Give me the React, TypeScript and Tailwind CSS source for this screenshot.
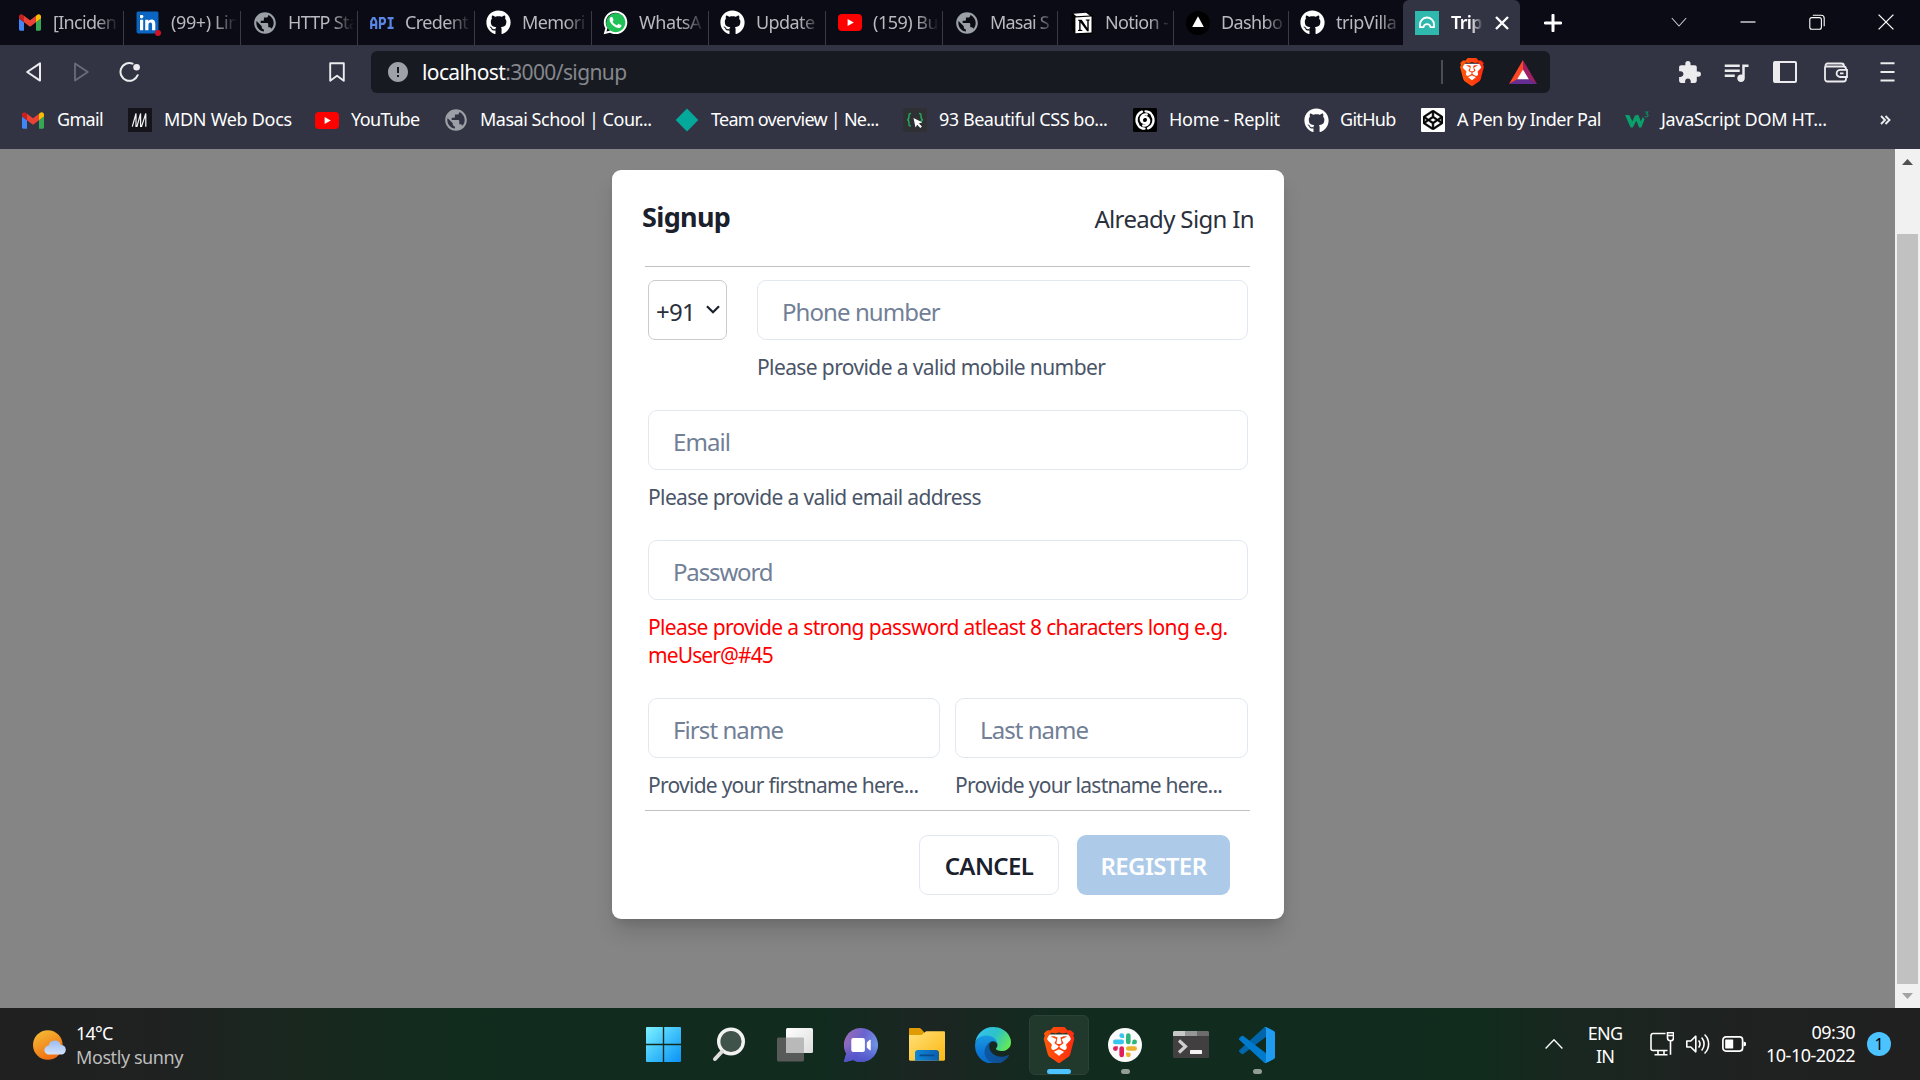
import type { ReactNode } from "react";
import { FaCodepen, FaGithub, FaLinkedin, FaWhatsapp } from "react-icons/fa";
import { MdError, MdExtension, MdPublic, MdQueueMusic } from "react-icons/md";
import { SiBrave } from "react-icons/si";

/* ---------- site icons ---------- */

const Gmail = () => (
  <svg viewBox="52 42 88 66" className="h-[17px] w-[22px]">
    <path fill="#4285f4" d="M58 108h14V74L52 59v43c0 3.32 2.69 6 6 6" />
    <path fill="#34a853" d="M120 108h14c3.32 0 6-2.69 6-6V59l-20 15" />
    <path fill="#fbbc04" d="M120 48v26l20-15v-8c0-7.42-8.47-11.65-14.4-7.2" />
    <path fill="#ea4335" d="M72 74V48l24 18 24-18v26L96 92" />
    <path fill="#c5221f" d="M52 51v8l20 15V48l-5.6-4.2c-5.94-4.45-14.4-.22-14.4 7.2" />
  </svg>
);

const LinkedIn = () => (
  <span className="relative flex size-[22px] items-center justify-center">
    <span className="absolute inset-[3px] bg-white" />
    <FaLinkedin className="relative size-[25px] shrink-0 text-[#0a66c2]" />
    <span className="absolute -right-[2px] -bottom-[2px] size-[6px] rounded-full bg-[#d11124]" />
  </span>
);

const Globe = () => <MdPublic className="size-[26px] shrink-0 text-[#9aa0a6]" />;

const Api = () => (
  <svg viewBox="0 0 24 12" className="h-[12px] w-[24px]" fill="none" stroke="#5b86e5" strokeWidth="2.2">
    <path d="M1.2 12V4.5L3 1.1h1.4l1.8 3.4V12M1.2 7.8h5M10 12V1.1h3.6l1.3 1.5v2.6l-1.3 1.6H10M17.6 1.1h6M20.6 1.1v9.8M17.6 10.9h6" />
  </svg>
);

const GitHub = () => <FaGithub className="size-[25px] shrink-0 text-white" />;

const WhatsApp = () => (
  <span className="relative flex size-[24px] items-center justify-center">
    <span className="absolute inset-[2px] rounded-full bg-[#1fc157]" />
    <FaWhatsapp className="relative size-[27px] shrink-0 text-white" />
  </span>
);

const YouTube = () => (
  <svg viewBox="0 0 24 17" className="h-[17px] w-[24px]">
    <rect width="24" height="17" rx="4" fill="#f00" />
    <path d="M9.6 4.9v7.2l6.2-3.6z" fill="#fff" />
  </svg>
);

const Notion = () => (
  <svg viewBox="0 0 24 24" className="size-[24px]">
    <path d="M1.5 2.5 17 1l6 4v17.5L6.500 23.500 1.500 18z" fill="#000" />
    <path d="M3.400 2.800 16 1.800l3.800 2.600L6.300 5.200z" fill="#fff" />
    <path d="M5.400 6.600 21.500 5.600v15.800L5.400 22.300z" fill="#fff" />
    <path d="M8 8.800h3.700l5.600 8.200V9.800l-1.500-.3V8.500h4v.8l-1.100.5v10.500h-1.600L10.600 11.400v7.300l1.700.4v.8H8v-.8l1.200-.4V9.900L8 9.600z" fill="#000" />
  </svg>
);

const Vercel = () => (
  <svg viewBox="0 0 24 24" className="size-[24px]">
    <circle cx="12" cy="12" r="12" fill="#000" />
    <path d="M12 5.200 17.800 16H6.200z" fill="#fff" />
  </svg>
);

const TripVilla = () => (
  <svg viewBox="0 0 24 24" className="size-[24px]">
    <rect width="24" height="24" fill="#2fb8ad" />
    <path
      d="M5 16.200v-2.700a7 7 0 0 1 14 0v2.700h-3.400c-.5-2-1.700-3-3.600-3s-3.100 1-3.600 3z"
      fill="none"
      stroke="#fff"
      strokeWidth="1.800"
      strokeLinejoin="round"
    />
  </svg>
);

const Mdn = () => (
  <svg viewBox="0 0 24 24" className="size-[24px]">
    <rect width="24" height="24" fill="#15141a" />
    <path d="M4.300 18.700 8 5.500V18.500h1L12.600 5.500V18.500h1L17.800 5.500V18.700" fill="none" stroke="#f4f4f4" strokeWidth="1.200" />
  </svg>
);

const Diamond = () => (
  <svg viewBox="0 0 24 24" className="size-[24px]">
    <path d="M12 .6 23.300 12 12 23.400.7 12z" fill="#05a99c" />
  </svg>
);

const CssBox = () => (
  <svg viewBox="0 0 24 24" className="size-[24px]">
    <rect width="24" height="24" rx="3" fill="#2f3033" />
    <path d="M8 5.500c-2.200 0-2 1-2 3s0 3-1.800 3.300C6 12.200 6 13 6 15s-.2 3 2 3M16 5.500c2.200 0 2 1 2 3s0 3 1.800 3.300c-1.600.4-1.800 1.200-1.800 3.200" fill="none" stroke="#25a45b" strokeWidth="1.500" />
    <path d="m10.500 10 8.600 4.300-3.200 1.100 3 3.200-1.600 1.500-3-3.300-1.800 2.700z" fill="#fff" />
  </svg>
);

const Replit = () => (
  <svg viewBox="0 0 24 24" className="size-[24px]">
    <rect width="24" height="24" rx="1.500" fill="#000" />
    <g fill="none" stroke="#fff" strokeWidth="2.300" strokeLinecap="round">
      <path d="M9.200 13.500a3.200 3.200 0 0 1 3-4.600c2.400 0 4.300 2 4 4.600-.4 2.800-3 4.600-6 4M14.800 10.500a3.200 3.200 0 0 1-3 4.600c-2.400 0-4.300-2-4-4.600.4-2.800 3-4.600 6-4" />
      <path d="M5.300 17.300C1.800 12.500 3.600 5.600 9 3.600M18.700 6.700c3.500 4.800 1.700 11.700-3.700 13.700M12.500 3.300c2.400 0 4.400.9 5.600 2.400M11.500 20.700c-2.400 0-4.400-.9-5.600-2.400" />
    </g>
  </svg>
);

const CodePen = () => (
  <span className="flex size-[24px] items-center justify-center rounded-[1px] bg-white">
    <FaCodepen className="size-[20px] stroke-black stroke-[14px] text-black" />
  </span>
);

const W3 = () => (
  <svg viewBox="0 0 24 18" className="h-[18px] w-[24px]">
    <path d="M0 4h4.300l3 6.200L10 4.500l3.300-.8 2.500 6.500 2-4.200 1.800 2.200-3.300 8.300h-2.200l-2.700-6.800-3.600 6.800H5.600z" fill="#0a9f6b" />
    <path d="M19.800 1h3L21.500 3c2.200 0 2 3-.2 3-.8 0-1.300-.3-1.600-.8" fill="none" stroke="#0a8f62" strokeWidth="1.100" />
  </svg>
);

const Lion = ({ id, className }: { id: string; className: string }) => (
  <span className={className}>
    <svg className="absolute size-0">
      <defs>
        <linearGradient id={id} x1="0" y1="0" x2="1" y2="0">
          <stop offset="0" stopColor="#ff5a08" />
          <stop offset="1" stopColor="#ff2a10" />
        </linearGradient>
      </defs>
    </svg>
    <svg viewBox="0 0 24 24" className="absolute inset-0 size-full">
      <path d="M5 5h14l1.500 3-2.500 9-6 5-6-5L3.500 8z" fill="#fff" />
    </svg>
    <SiBrave className="absolute inset-0 size-full" style={{ fill: `url(#${id})` }} />
  </span>
);

/* ---------- tab strip ---------- */

type Tab = { icon: ReactNode; text: string; width: string; tracking: string; pad?: string };

const tabs: Tab[] = [
  { icon: <Gmail />, text: "[Inciden", width: "w-[124px]", tracking: "tracking-[-0.7px]", pad: "pl-[17px]" },
  { icon: <LinkedIn />, text: "(99+) Lin", width: "w-[117px]", tracking: "tracking-[-0.4px]" },
  { icon: <Globe />, text: "HTTP Sta", width: "w-[117px]", tracking: "tracking-[-0.7px]" },
  { icon: <Api />, text: "Credent", width: "w-[117px]", tracking: "tracking-[-0.6px]" },
  { icon: <GitHub />, text: "Memori", width: "w-[117px]", tracking: "tracking-[-0.6px]" },
  { icon: <WhatsApp />, text: "WhatsA", width: "w-[117px]", tracking: "tracking-[-0.4px]" },
  { icon: <GitHub />, text: "Update", width: "w-[117px]", tracking: "tracking-[-0.6px]" },
  { icon: <YouTube />, text: "(159) Bu", width: "w-[117px]", tracking: "tracking-[-0.5px]" },
  { icon: <Globe />, text: "Masai S", width: "w-[115px]", tracking: "tracking-[-0.8px]" },
  { icon: <Notion />, text: "Notion -", width: "w-[116px]", tracking: "tracking-[-0.6px]" },
  { icon: <Vercel />, text: "Dashbo", width: "w-[115px]", tracking: "tracking-[-0.6px]" },
  { icon: <GitHub />, text: "tripVilla", width: "w-[115px]", tracking: "tracking-[-0.45px]" },
];

function TabStrip() {
  return (
    <div className="flex h-[45px] items-center bg-[#0b0b15] text-[18px] text-[#b9bac0]">
      {tabs.map((t, i) => (
        <div
          key={i}
          className={`flex h-full shrink-0 items-center ${t.width} ${t.pad ?? "pl-[11px]"} ${
            i < 11 ? "bg-[linear-gradient(#3a3b40,#3a3b40)] bg-[length:1.5px_34px] bg-[position:100%_11px] bg-no-repeat" : ""
          }`}
        >
          <span className="flex w-[25px] shrink-0 items-center justify-center">{t.icon}</span>
          <span
            className={`ml-[11px] w-[66px] whitespace-nowrap [mask-image:linear-gradient(90deg,#000_66%,transparent)] ${t.tracking}`}
          >
            {t.text}
          </span>
        </div>
      ))}
      <div className="ml-[-1px] flex h-full w-[117px] items-center rounded-t-[6px] bg-[#323443] pl-[12px] text-white">
        <TripVilla />
        <span className="ml-[12px] w-[32px] font-semibold tracking-[-0.7px] whitespace-nowrap [mask-image:linear-gradient(90deg,#000_60%,transparent)]">
          Trip
        </span>
        <svg viewBox="0 0 14 14" className="ml-[12px] size-[14px]" stroke="#fff" strokeWidth="2.400">
          <path d="m1 1 12 12M13 1 1 13" />
        </svg>
      </div>
      <svg viewBox="0 0 18 18" className="ml-[24px] size-[18px]" stroke="#fff" strokeWidth="3" strokeLinecap="round">
        <path d="M9 1.200v15.600M1.200 9h15.600" />
      </svg>
      <div className="mr-[26px] ml-auto flex items-center gap-[53px] pb-[1px]">
        <svg viewBox="0 0 16 16" className="size-[16px]" fill="none" stroke="#c8c8cc" strokeWidth="1.100">
          <path d="m.8 4 7.200 8 7.200-8" />
        </svg>
        <svg viewBox="0 0 16 16" className="size-[16px]" stroke="#fff" strokeWidth="1.200">
          <path d="M.5 8h15" />
        </svg>
        <svg viewBox="0 0 16 16" className="size-[16px]" fill="none" stroke="#fff" strokeWidth="1.100">
          <rect x=".8" y="3.600" width="11.600" height="11.600" rx="2" />
          <path d="M3.800 1.200h8.400a3 3 0 0 1 3 3v8" />
        </svg>
        <svg viewBox="0 0 16 16" className="size-[16px]" stroke="#fff" strokeWidth="1.300">
          <path d="m.6.600 14.800 14.800M15.400.6.600 15.400" />
        </svg>
      </div>
    </div>
  );
}

/* ---------- toolbar ---------- */

function Toolbar() {
  return (
    <div className="flex h-[54px] items-center text-[#ececee]">
      <svg viewBox="0 0 16 20" className="ml-[26px] h-[20px] w-[16px]" fill="none" stroke="#ececee" strokeWidth="2" strokeLinejoin="round">
        <path d="M14 1.400v17.200L1.200 10z" />
      </svg>
      <svg viewBox="0 0 16 20" className="ml-[31px] h-[20px] w-[16px]" fill="none" stroke="#6a6c79" strokeWidth="1.800" strokeLinejoin="round">
        <path d="M2 1.400v17.200L14.800 10z" />
      </svg>
      <svg viewBox="0 0 22 22" className="ml-[30px] size-[22px]" fill="none">
        <path d="M13.600 2.600A8.900 8.900 0 1 0 18.700 14.200" stroke="#ececee" strokeWidth="2" strokeLinecap="round" />
        <circle cx="17.600" cy="6.200" r="3.300" fill="#ececee" />
      </svg>
      <svg viewBox="0 0 16 20" className="ml-[188px] h-[20px] w-[16px]" fill="none" stroke="#ececee" strokeWidth="1.900" strokeLinejoin="round">
        <path d="M1.200 1.200h13.600v17.600L8 13.800l-6.800 5z" />
      </svg>
      <div className="ml-[26px] flex h-[42px] w-[1179px] items-center rounded-[6px] bg-[#181a21] text-[21px]">
        <MdError className="ml-[15px] size-[24px] text-[#9fa1a8]" />
        <span className="ml-[12px] flex-1 pt-[2px] tracking-[-0.62px] text-white">
          localhost<span className="text-[#85878c]">:3000/signup</span>
        </span>
        <span className="h-[24px] w-[2px] bg-[#4b4d55]" />
        <Lion id="lion-bar" className="relative ml-[15px] size-[28px]" />
        <svg viewBox="0 0 28 24" className="mr-[13px] ml-[23px] h-[24px] w-[28px]">
          <path d="M14 0 0 24l9-4.500L14 10z" fill="#ff4724" />
          <path d="M14 0v10l5 9.500 9 4.500z" fill="#9e1f63" />
          <path d="M0 24h28l-8.500-5h-11z" fill="#662d91" />
          <path d="m14 9.500 5.800 9.700H8.200z" fill="#fff" />
        </svg>
      </div>
      <MdExtension className="ml-[127px] size-[25px]" />
      <MdQueueMusic className="ml-[19px] size-[30px]" />
      <svg viewBox="0 0 24 22" className="ml-[22px] h-[22px] w-[24px]" fill="none">
        <rect x="1" y="1" width="22" height="20" rx="1" stroke="#ececee" strokeWidth="2" />
        <rect x="1" y="1" width="6" height="20" fill="#ececee" />
      </svg>
      <svg viewBox="0 0 24 21" className="ml-[27px] h-[21px] w-[24px]" fill="none" stroke="#ececee" strokeWidth="1.800">
        <path d="M1 4.500V17a2.500 2.500 0 0 0 2.500 2.500h16A2.500 2.500 0 0 0 22 17v-2M22 8V7a2.500 2.500 0 0 0-2.500-2.500H1.500V3.500A2 2 0 0 1 3.500 1.500h14A2.500 2.500 0 0 1 20 4" />
        <path d="M23 7.800h-6.800a3.600 3.600 0 0 0 0 7.200H23zM16 11.400h3.500" />
      </svg>
      <svg viewBox="0 0 14 20" className="ml-[32px] h-[20px] w-[15px]" stroke="#ececee" strokeWidth="2">
        <path d="M0 1.200h14M0 10h14M0 18.600h14" />
      </svg>
    </div>
  );
}

/* ---------- bookmarks ---------- */

const bookmarks: { icon: ReactNode; text: string; width: string; tracking: string }[] = [
  { icon: <Gmail />, text: "Gmail", width: "w-[107px]", tracking: "tracking-[-0.7px]" },
  { icon: <Mdn />, text: "MDN Web Docs", width: "w-[187px]", tracking: "tracking-[-0.3px]" },
  { icon: <YouTube />, text: "YouTube", width: "w-[129px]", tracking: "tracking-[-0.6px]" },
  { icon: <Globe />, text: "Masai School | Cour...", width: "w-[231px]", tracking: "tracking-[-0.48px]" },
  { icon: <Diamond />, text: "Team overview | Ne...", width: "w-[228px]", tracking: "tracking-[-0.74px]" },
  { icon: <CssBox />, text: "93 Beautiful CSS bo...", width: "w-[230px]", tracking: "tracking-[-0.45px]" },
  { icon: <Replit />, text: "Home - Replit", width: "w-[171px]", tracking: "tracking-[-0.3px]" },
  { icon: <GitHub />, text: "GitHub", width: "w-[117px]", tracking: "tracking-[-0.7px]" },
  { icon: <CodePen />, text: "A Pen by Inder Pal", width: "w-[204px]", tracking: "tracking-[-0.55px]" },
  { icon: <W3 />, text: "JavaScript DOM HT...", width: "w-[220px]", tracking: "tracking-[-0.32px]" },
];

function Bookmarks() {
  return (
    <div className="flex h-[50px] items-start pl-[21px] text-[18px] text-white">
      {bookmarks.map((b) => (
        <div key={b.text} className={`flex h-[42px] shrink-0 items-center whitespace-nowrap ${b.width}`}>
          <span className="flex w-[24px] shrink-0 items-center justify-center">{b.icon}</span>
          <span className={`ml-[12px] pb-[2px] ${b.tracking}`}>{b.text}</span>
        </div>
      ))}
      <svg viewBox="0 0 11 10" className="mt-[16px] ml-[35px] h-[10px] w-[11px]" fill="none" stroke="#ececee" strokeWidth="1.900">
        <path d="m1 1 4 4-4 4M5.500 1l4 4-4 4" />
      </svg>
    </div>
  );
}

/* ---------- signup form ---------- */

function Field({ placeholder, help, helpClass, className, tracking }: { placeholder: string; help: ReactNode; helpClass: string; className: string; tracking: string }) {
  return (
    <div className={className}>
      <div className={`flex h-[60px] items-center rounded-[9px] border border-[#e2e8f0] px-[24px] pt-[3px] text-[24px] text-[#718096] ${tracking}`}>
        {placeholder}
      </div>
      <p className={`mt-[13px] mb-[-1px] text-[21px] leading-[28px] ${helpClass}`}>{help}</p>
    </div>
  );
}

function SignupCard() {
  return (
    <div className="flex h-[749px] w-[672px] flex-col rounded-[9px] bg-white px-[30px] text-[#1a202c] shadow-[0_15px_22px_-4px_rgba(0,0,0,0.16),0_6px_9px_-3px_rgba(0,0,0,0.08)]">
      <div className="flex h-[96px] items-center justify-between">
        <h1 className="pb-[2px] text-[27px] font-bold tracking-[-0.65px]">Signup</h1>
        <span className="pt-[2px] text-[24px] tracking-[-0.65px] text-[#2a303c]">Already Sign In</span>
      </div>
      <div className="mr-[4px] ml-[3px] h-px bg-[#c1c1c1]" />
      <div className="mx-[6px] mt-[13px] flex flex-col gap-[30px]">
        <div className="flex gap-[30px]">
          <div className="flex h-[60px] w-[79px] items-center justify-between rounded-[7px] border border-[#cbcbcb] pt-[3px] pr-[6px] pl-[7px] text-[24px] tracking-[-0.7px] text-[#2a303c]">
            +91
            <svg viewBox="0 0 14 9" className="mb-[4px] h-[9px] w-[14px]" fill="none" stroke="#1a202c" strokeWidth="2.200">
              <path d="m1 1.200 6 6 6-6" />
            </svg>
          </div>
          <Field placeholder="Phone number" help="Please provide a valid mobile number" className="w-[491px]" tracking="tracking-[-0.92px]" helpClass="tracking-[-0.61px] text-[#4a5568]" />
        </div>
        <Field placeholder="Email" help="Please provide a valid email address" className="w-[600px]" tracking="tracking-[-0.95px]" helpClass="tracking-[-0.62px] text-[#4a5568]" />
        <Field
          placeholder="Password"
          help={
            <>
              Please provide a strong password atleast 8 characters long e.g.{" "}
              <span className="tracking-[-0.9px]">meUser@#45</span>
            </>
          }
          className="w-[600px]"
          tracking="tracking-[-1.15px]"
          helpClass="tracking-[-0.64px] text-[#ff0000]"
        />
        <div className="flex gap-[15px]">
          <Field placeholder="First name" help="Provide your firstname here..." className="w-[292px]" tracking="tracking-[-0.92px]" helpClass="tracking-[-0.74px] text-[#4a5568] whitespace-nowrap" />
          <Field placeholder="Last name" help="Provide your lastname here..." className="w-[293px]" tracking="tracking-[-0.95px]" helpClass="tracking-[-0.73px] text-[#4a5568] whitespace-nowrap" />
        </div>
      </div>
      <div className="mt-[12px] mr-[4px] ml-[3px] h-px bg-[#c1c1c1]" />
      <div className="mt-[24px] mr-[24px] flex justify-end gap-[18px] text-[24px] font-semibold">
        <div className="flex h-[60px] w-[140px] items-center justify-center rounded-[9px] border border-[#e2e8f0] pt-[1px] tracking-[-0.6px]">CANCEL</div>
        <div className="flex h-[60px] w-[153px] items-center justify-center rounded-[9px] bg-[#adcbe9] pt-[1px] tracking-[-0.6px] text-white">REGISTER</div>
      </div>
    </div>
  );
}

function Page() {
  return (
    <div className="flex h-[859px] bg-[#858585]">
      <div className="flex flex-1 justify-center pt-[21px] pl-[1px]">
        <SignupCard />
      </div>
      <div className="flex w-[25px] flex-col items-center bg-[#f1f1f1]">
        <svg viewBox="0 0 11 6" className="mt-[10px] h-[6px] w-[11px]">
          <path d="M0 6 5.500 0 11 6z" fill="#505050" />
        </svg>
        <div className="mt-[69px] h-[750px] w-[21px] bg-[#c1c1c1]" />
        <svg viewBox="0 0 11 6" className="mt-[9px] h-[6px] w-[11px]">
          <path d="M0 0h11L5.500 6z" fill="#a3a3a3" />
        </svg>
      </div>
    </div>
  );
}

/* ---------- taskbar ---------- */

const Start = () => (
  <svg viewBox="0 0 35 35" className="size-[35px]">
    <defs>
      <linearGradient id="start" x1="0" y1="0" x2="35" y2="35" gradientUnits="userSpaceOnUse">
        <stop offset="0" stopColor="#7df3ff" />
        <stop offset=".5" stopColor="#3fc1fb" />
        <stop offset="1" stopColor="#0a92f5" />
      </linearGradient>
    </defs>
    <path fill="url(#start)" d="M1 0h15.800v16.800H0V1a1 1 0 0 1 1-1zM18.200 0H34a1 1 0 0 1 1 1v15.800H18.200zM0 18.200h16.800V35H1a1 1 0 0 1-1-1zM18.200 18.200H35V34a1 1 0 0 1-1 1H18.200z" />
  </svg>
);

const Search = () => (
  <svg viewBox="0 0 34 35" className="h-[35px] w-[34px]">
    <circle cx="19" cy="14.500" r="12.300" fill="#40534a" stroke="#f2f2f2" strokeWidth="3.400" />
    <path d="m10 24.500-7 7.500" stroke="#dedede" strokeWidth="4" strokeLinecap="round" />
  </svg>
);

const TaskView = () => (
  <svg viewBox="0 0 36 34" className="h-[34px] w-[36px]">
    <defs>
      <linearGradient id="tv" x1="0" y1="0" x2="1" y2="1">
        <stop offset="0" stopColor="#fff" />
        <stop offset="1" stopColor="#dcdcdc" />
      </linearGradient>
    </defs>
    <rect y="9.500" width="27" height="24" rx="1.500" fill="#585a59" />
    <rect x="9" width="27" height="25" rx="1.500" fill="url(#tv)" />
    <path d="M9 9.500h17a1 1 0 0 1 1 1V25H10.500A1.500 1.500 0 0 1 9 23.500z" fill="#b9b9b9" />
  </svg>
);

const Chat = () => (
  <svg viewBox="0 0 34 34" className="size-[34px]">
    <defs>
      <linearGradient id="chat" x1="0" y1=".2" x2="1" y2=".6">
        <stop offset="0" stopColor="#9a6bb5" />
        <stop offset=".5" stopColor="#6a63cf" />
        <stop offset="1" stopColor="#6f9be8" />
      </linearGradient>
      <linearGradient id="chat2" x1="0" y1="0" x2="0" y2="1">
        <stop offset=".5" stopColor="#4f52c9" stopOpacity="0" />
        <stop offset="1" stopColor="#4f52c9" />
      </linearGradient>
    </defs>
    <path d="M17 0a17 17 0 1 1-8 32L1.200 34c-1 .1-1.300-.5-1-1.300l2-7.200A17 17 0 0 1 17 0z" fill="url(#chat)" />
    <path d="M17 0a17 17 0 1 1-8 32L1.200 34c-1 .1-1.300-.5-1-1.300l2-7.200A17 17 0 0 1 17 0z" fill="url(#chat2)" />
    <rect x="7.300" y="10" width="13.600" height="14" rx="2" fill="#fff" />
    <path d="m22.800 14.500 3-2.700c.4-.3.900-.1.900.5v9.400c0 .6-.5.800-.9.500l-3-2.700z" fill="#fff" />
  </svg>
);

const Explorer = () => (
  <svg viewBox="0 0 36 33" className="h-[33px] w-[36px]">
    <defs>
      <linearGradient id="ex" x1="0" y1="0" x2="1" y2="1">
        <stop offset="0" stopColor="#ffe07a" />
        <stop offset="1" stopColor="#fcb80f" />
      </linearGradient>
      <linearGradient id="ex2" x1="0" y1="0" x2="1" y2="0">
        <stop offset="0" stopColor="#1086d8" />
        <stop offset="1" stopColor="#0b5fae" />
      </linearGradient>
    </defs>
    <path d="M1.200 0H10c1 0 1.400.2 2 .8L15 4v6H0V1.200C0 .5.500 0 1.200 0z" fill="#e09b05" />
    <path d="M0 7h11.500c1 0 1.500-.3 2.200-1l2.300-2c.7-.6 1.200-.8 2.200-.8h16.600c.7 0 1.200.5 1.200 1.200v27.200c0 .7-.5 1.200-1.200 1.200H1.200c-.7 0-1.200-.5-1.200-1.200z" fill="url(#ex)" />
    <path d="M6 32.800V25a3 3 0 0 1 3-3h18a3 3 0 0 1 3 3v7.800z" fill="url(#ex2)" />
    <rect x="10.500" y="26.500" width="15" height="1.800" rx=".9" fill="#084a8c" />
  </svg>
);

const Edge = () => (
  <svg viewBox="0 0 256 256" className="size-[36px]">
    <defs>
      <linearGradient id="ed1" x1="0" y1="0" x2="1" y2="0">
        <stop offset="0" stopColor="#0c59a4" />
        <stop offset="1" stopColor="#114a8b" />
      </linearGradient>
      <linearGradient id="ed2" x1="0" y1="0" x2="0" y2="1">
        <stop offset="0" stopColor="#1b9de2" />
        <stop offset=".6" stopColor="#0c78d6" />
        <stop offset="1" stopColor="#0a68c8" />
      </linearGradient>
      <linearGradient id="ed3" x1="0" y1=".3" x2="1" y2=".7">
        <stop offset="0" stopColor="#35c1f1" />
        <stop offset=".5" stopColor="#2cc3c9" />
        <stop offset="1" stopColor="#66eb4e" />
      </linearGradient>
    </defs>
    <path fill="url(#ed1)" d="M235.680 199.600c-3.400 1.800-6.900 3.400-10.600 4.700a101.900 101.900 0 0 1-35.900 6.460c-47.320 0-88.540-32.550-88.540-74.320.1-11.400 6.400-21.900 16.420-27.300-42.800 1.800-53.800 46.400-53.800 72.530 0 73.880 68.090 81.370 82.760 81.370 7.910 0 19.840-2.300 27-4.560l1.310-.44a128.340 128.340 0 0 0 66.600-52.800 4 4 0 0 0-5.320-5.640z" />
    <path fill="url(#ed2)" d="M105.730 246.760a79.200 79.200 0 0 1-22.740-21.340 80.720 80.720 0 0 1 29.530-120c3.120-1.470 8.450-4.130 15.540-4a32.350 32.350 0 0 1 25.690 13 31.880 31.880 0 0 1 6.360 18.660c0-.21 24.460-79.600-80-79.600-43.900 0-80 41.660-80 78.210a130.150 130.150 0 0 0 12.110 56 128 128 0 0 0 156.380 67.110 75.550 75.550 0 0 1-62.780-8z" />
    <path fill="url(#ed3)" d="M152.330 148.860c-.81 1.050-3.300 2.500-3.300 5.660 0 2.610 1.700 5.120 4.720 7.230 14.380 10 41.490 8.680 41.560 8.680a59.560 59.560 0 0 0 30.270-8.350A61.380 61.380 0 0 0 256 109.200c.26-22.410-8-37.310-11.340-43.910C223.460 23.840 177.720 0 128 0A128 128 0 0 0 0 126.200c.48-36.540 36.800-66.050 80-66.050 3.500 0 23.460.34 42 10.070 16.340 8.580 24.900 18.940 30.850 29.210 6.180 10.670 7.280 24.150 7.280 29.520 0 5.370-2.740 13.330-7.800 19.910z" />
  </svg>
);

const Slack = () => (
  <svg viewBox="0 0 34 34" className="size-[34px]">
    <circle cx="17" cy="17" r="17" fill="#fbfbfb" />
    <g fill="#36c5f0">
      <rect x="5" y="11.600" width="11" height="4.600" rx="2.300" />
      <path d="M13.700 5.200a2.400 2.400 0 0 1 2.400 2.400V10h-2.400a2.400 2.400 0 0 1 0-4.800z" />
    </g>
    <g fill="#2eb67d">
      <rect x="18" y="5.200" width="4.600" height="11" rx="2.300" />
      <path d="M29 13.900a2.400 2.400 0 0 1-2.400 2.400h-2.400v-2.400a2.400 2.400 0 0 1 4.800 0z" />
    </g>
    <g fill="#ecb22e">
      <rect x="18" y="18.200" width="11" height="4.600" rx="2.300" />
      <path d="M20.400 29.200a2.400 2.400 0 0 1-2.400-2.400v-2.400h2.400a2.400 2.400 0 0 1 0 4.800z" />
    </g>
    <g fill="#e01e5a">
      <rect x="11.400" y="18.200" width="4.600" height="11" rx="2.300" />
      <path d="M5 20.600a2.400 2.400 0 0 1 2.400-2.400h2.400v2.400a2.400 2.400 0 0 1-4.800 0z" />
    </g>
  </svg>
);

const Terminal = () => (
  <svg viewBox="0 0 36 27" className="h-[27px] w-[36px]">
    <rect width="36" height="27" rx="1.500" fill="#423f41" />
    <path d="M1.500 0H12v5H0V1.500A1.500 1.500 0 0 1 1.500 0z" fill="#c8c8c8" />
    <path d="M12 0h12v5H12z" fill="#979797" />
    <path d="M24 0h10.500A1.500 1.500 0 0 1 36 1.500V5H24z" fill="#6c6c6c" />
    <path d="m6 9.500 6.500 6-6.500 6" fill="none" stroke="#cfcfcf" strokeWidth="3.200" />
    <rect x="17" y="19" width="12" height="4" rx=".6" fill="#f3f3f3" />
  </svg>
);

const VsCode = () => (
  <svg viewBox="0 0 100 100" className="size-[36px]">
    <path fill="#0065a9" d="M96.460 10.800 75.860.870a6.230 6.230 0 0 0-7.100 1.200L1.300 63.600a4.170 4.170 0 0 0 0 6.160l5.500 5a4.170 4.170 0 0 0 5.320.24l81.230-61.620c2.730-2.080 6.650-.13 6.650 3.280v-.24a6.250 6.250 0 0 0-3.540-5.620z" />
    <path fill="#007acc" d="m96.460 89.200-20.600 9.930a6.230 6.230 0 0 1-7.100-1.200L1.300 36.400a4.170 4.170 0 0 1 0-6.160l5.500-5a4.170 4.170 0 0 1 5.320-.24l81.230 61.620c2.730 2.070 6.650.12 6.650-3.300v.24a6.250 6.250 0 0 1-3.540 5.640z" />
    <path fill="#1f9cf0" d="M75.860 99.130a6.230 6.230 0 0 1-7.110-1.200A3.670 3.670 0 0 0 75 95.330V4.670a3.670 3.670 0 0 0-6.260-2.600 6.230 6.230 0 0 1 7.120-1.200l20.600 9.900A6.250 6.250 0 0 1 100 16.400v67.200a6.250 6.250 0 0 1-3.540 5.630z" />
  </svg>
);

const apps: { icon: ReactNode; state?: "active" | "open" }[] = [
  { icon: <Start /> },
  { icon: <Search /> },
  { icon: <TaskView /> },
  { icon: <Chat /> },
  { icon: <Explorer /> },
  { icon: <Edge /> },
  { icon: <Lion id="lion-task" className="relative size-[36px]" />, state: "active" },
  { icon: <Slack />, state: "open" },
  { icon: <Terminal /> },
  { icon: <VsCode />, state: "open" },
];

function Taskbar() {
  return (
    <div className="flex h-[72px] items-center bg-[linear-gradient(90deg,#202020_0px,#202121_140px,#18281f_320px,#112b1d_450px,#112b1f_820px,#1c2522_930px,#112b1f_1060px,#112b1d_1480px,#1a2620_1590px,#202121_1760px,#202020_1920px)] text-[18px] text-white">
      <div className="flex w-[634px] items-center pl-[33px]">
        <svg viewBox="0 0 33 30" className="mt-[2px] h-[30px] w-[33px]">
          <defs>
            <linearGradient id="sun" x1=".2" y1="0" x2=".7" y2="1">
              <stop offset="0" stopColor="#f4bb35" />
              <stop offset="1" stopColor="#f0680f" />
            </linearGradient>
            <linearGradient id="cloud" x1="0" y1="0" x2="0" y2="1">
              <stop offset="0" stopColor="#9dbcf2" />
              <stop offset="1" stopColor="#d3e2fb" />
            </linearGradient>
          </defs>
          <circle cx="14.800" cy="15" r="14.800" fill="url(#sun)" />
          <path d="M16 24.500a4.500 4.500 0 0 1-.3-9 6.200 6.200 0 0 1 12-.6 4.800 4.800 0 0 1 .6 9.600z" fill="url(#cloud)" />
        </svg>
        <div className="ml-[10px] flex flex-col pt-[2px] leading-[24px]">
          <span className="tracking-[-0.8px]">14°C</span>
          <span className="tracking-[-0.42px] text-[#bdbdbd]">Mostly sunny</span>
        </div>
      </div>
      <div className="-ml-px flex gap-[6px] pt-[1px]">
        {apps.map((a, i) => (
          <div
            key={i}
            className={`relative flex size-[60px] items-center justify-center rounded-[6px] ${
              a.state === "active" ? "border border-[#2c4237] bg-[#21382d]" : ""
            }`}
          >
            {a.icon}
            {a.state === "active" && <span className="absolute bottom-0 h-[5px] w-[24px] rounded-full bg-[#4cc2ff]" />}
            {a.state === "open" && <span className="absolute bottom-[1px] h-[5px] w-[9px] rounded-full bg-[#929d97]" />}
          </div>
        ))}
      </div>
      <div className="ml-auto flex items-center pr-[29px]">
        <svg viewBox="0 0 18 10" className="h-[10px] w-[18px]" fill="none" stroke="#fff" strokeWidth="1.400">
          <path d="m.6 9.400 8.400-8.600 8.400 8.600" />
        </svg>
        <div className="ml-[24px] flex w-[36px] flex-col items-center pt-[1px] leading-[23px]">
          <span className="tracking-[-0.8px]">ENG</span>
          <span className="tracking-[-0.8px]">IN</span>
        </div>
        <svg viewBox="0 0 24 24" className="ml-[27px] size-[24px]" fill="none" stroke="#fff" strokeWidth="1.600">
          <path d="M15.500 1.500H3A2 2 0 0 0 1 3.500v13a2 2 0 0 0 2 2h14.500M8 18.500V22M14 18.500V22M4.500 22.800h13M17.500.8h6v5a3 3 0 0 1-3 3 3 3 0 0 1-3-3zM17.500 3.500h6M20.500 8.800v14" />
        </svg>
        <svg viewBox="0 0 24 20" className="ml-[12px] h-[20px] w-[24px]" fill="none" stroke="#fff" strokeWidth="1.600" strokeLinejoin="round" strokeLinecap="round">
          <path d="M.8 7v6h4l5 4.800V2.200L4.800 7zM13 7c1.200 1.800 1.200 4.200 0 6M16 4c2.800 3.500 2.800 8.500 0 12M19 1c4.800 5 4.800 13 0 18" />
        </svg>
        <svg viewBox="0 0 24 16" className="ml-[12px] h-[16px] w-[24px]" fill="none">
          <rect x=".9" y=".9" width="19.700" height="14.200" rx="3" stroke="#fff" strokeWidth="1.700" />
          <rect x="3.200" y="3.400" width="8" height="9.200" rx=".6" fill="#fff" />
          <path d="M21.500 5.500 24 6.500v3l-2.500 1z" fill="#fff" />
        </svg>
        <div className="ml-[18px] flex w-[91px] flex-col items-end leading-[23px]">
          <span className="tracking-[-0.5px]">09:30</span>
          <span className="tracking-[-0.5px]">10-10-2022</span>
        </div>
        <span className="ml-[12px] flex size-[24px] items-center justify-center rounded-full bg-[#4cc2ff] text-[16px] text-black">1</span>
      </div>
    </div>
  );
}

export default function App() {
  return (
    <div className="flex h-[1080px] w-[1920px] flex-col overflow-hidden bg-[#323443] font-['Noto_Sans','Open_Sans',sans-serif]">
      <TabStrip />
      <Toolbar />
      <Bookmarks />
      <Page />
      <Taskbar />
    </div>
  );
}
